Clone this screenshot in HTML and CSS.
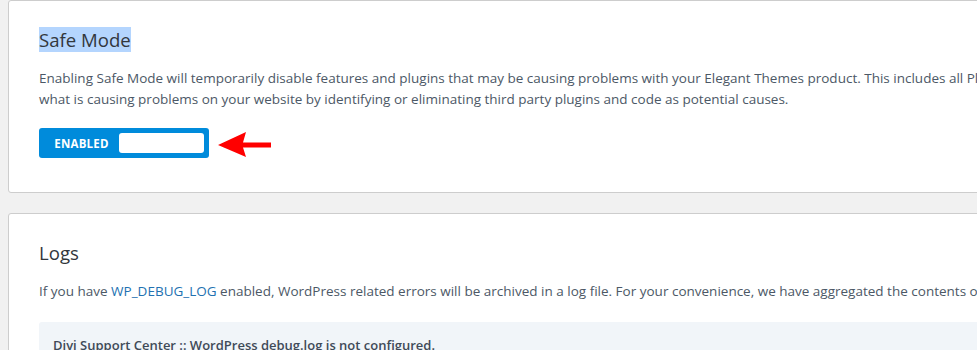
FILE: index.html
```html
<!DOCTYPE html>
<html lang="en">
<head>
<meta charset="utf-8">
<title>Support Center</title>
<link rel="stylesheet" href="styles.css">
</head>
<body>
<main class="page">
  <section class="card">
    <h2 class="card-title"><span class="selected">Safe Mode</span></h2>
    <p class="card-text">Enabling Safe Mode will temporarily disable features and plugins that may be causing problems with your Elegant Themes product. This includes all Plugins, Child Themes, and Custom Code added to your site. Safe Mode will help you determine<br>what is causing problems on your website by identifying or eliminating third party plugins and code as potential causes.</p>
    <div class="toggle-row">
      <div class="toggle">
        <span class="toggle-label">ENABLED</span>
        <span class="toggle-knob"></span>
      </div>
      <svg class="arrow" width="54" height="30" viewBox="0 0 54 30" aria-hidden="true">
        <polygon points="0,17 28,4 25,14.6 53,14.6 53,19.4 25,19.4 28,29" fill="#ff0000"/>
      </svg>
    </div>
  </section>
  <section class="card">
    <h2 class="card-title">Logs</h2>
    <p class="card-text">If you have <a class="link" href="#">WP_DEBUG_LOG</a> enabled, WordPress related errors will be archived in a log file. For your convenience, we have aggregated the contents of this log file below.</p>
    <div class="log-box">Divi Support Center :: WordPress debug.log is not configured.</div>
  </section>
</main>
</body>
</html>
```
FILE: styles.css
```css
html, body {
  margin: 0;
  padding: 0;
  overflow: hidden;
  background: #f1f1f1;
}
body {
  font-family: "Open Sans", "Noto Sans", sans-serif;
  color: #4c5866;
}
.page {
  display: flex;
  flex-direction: column;
  gap: 20px;
  padding: 0 0 0 8px;
  width: 1600px;
}
.card {
  background: #fff;
  border: 1px solid #cdcdcd;
  border-radius: 3px;
  padding: 27px 30px 34px 30px;
}
.card-title {
  margin: 0;
  font-size: 18.6px;
  line-height: 24px;
  font-weight: 400;
  color: #32373c;
}
.selected {
  background: #b4d5fe;
}
.card-text {
  margin: 16px 0 0 0;
  font-size: 13.5px;
  line-height: 21px;
  font-weight: 500;
  white-space: nowrap;
}
.link {
  color: #2271b1;
  text-decoration: none;
}
.toggle-row {
  display: flex;
  align-items: flex-start;
  gap: 9px;
  margin-top: 18px;
}
.toggle {
  display: flex;
  align-items: center;
  width: 170px;
  height: 30px;
  box-sizing: border-box;
  padding: 5px;
  background: #008bdb;
  border-radius: 3px;
}
.toggle-label {
  color: #fff;
  font-size: 11.5px;
  font-weight: 700;
  width: 75px;
  text-align: center;
  letter-spacing: 0.2px;
}
.toggle-knob {
  flex: 1;
  height: 20px;
  background: #fff;
  border-radius: 3px;
}
.arrow {
  display: block;
}
.log-box {
  margin-top: 20px;
  background: #f1f5f9;
  border-radius: 3px;
  padding: 13px 14px;
  font-size: 13px;
  line-height: 21px;
  font-weight: 600;
  color: #3f4a58;
}
```
